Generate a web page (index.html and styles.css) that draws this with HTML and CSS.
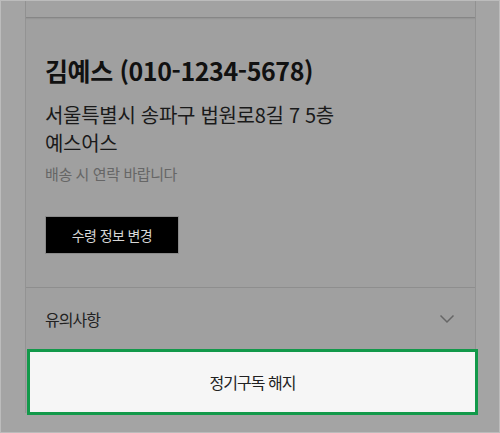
FILE: index.html
```html
<!DOCTYPE html>
<html lang="ko">
<head>
<meta charset="utf-8">
<link rel="stylesheet" href="styles.css">
</head>
<body>
<div class="frame">
  <div class="column">
    <div class="top-box"></div>
    <section class="info">
      <h2 class="name">김예스 (010-1234-5678)</h2>
      <p class="address">서울특별시 송파구 법원로8길 7 5층<br>예스어스</p>
      <p class="note">배송 시 연락 바랍니다</p>
      <button class="change-btn">수령 정보 변경</button>
    </section>
    <div class="notice-row">
      <span class="notice-label">유의사항</span>
      <svg class="chevron" width="16" height="10" viewBox="0 0 16 10"><path d="M1.5 1.5 L8 8 L14.5 1.5" fill="none" stroke="#666" stroke-width="1.5"/></svg>
    </div>
    <button class="cancel-btn">정기구독 해지</button>
  </div>
</div>
</body>
</html>
```

FILE: styles.css
```css
* { box-sizing: border-box; }
html, body { margin: 0; padding: 0; }
body {
  width: 500px;
  height: 433px;
  font-family: "Noto Sans CJK KR", "Noto Sans", sans-serif;
}
.frame {
  width: 500px;
  height: 433px;
  background: #a4a4a4;
  border: 1px solid #bcbcbc;
  overflow: hidden;
}
.column {
  margin-left: 24px;
  width: 451px;
  height: 412px;
  background: #a0a0a0;
  border-left: 1px solid #939393;
  border-right: 1px solid #939393;
}
.top-box {
  height: 17px;
  background: #a2a2a2;
  border-bottom: 1px solid #868686;
  box-shadow: 0 1px 1px rgba(0,0,0,0.06);
}
.info {
  padding: 36px 19px 0 19px;
  height: 270px;
  border-bottom: 1px solid #8e8e8e;
}
.name {
  margin: 0;
  font-size: 25px;
  font-weight: 700;
  line-height: 32px;
  color: #111;
  letter-spacing: -0.4px;
}
.address {
  margin: 15px 0 0 0;
  font-size: 20px;
  line-height: 28px;
  color: #1a1a1a;
  letter-spacing: -0.3px;
}
.note {
  margin: 7px 0 0 0;
  font-size: 15px;
  line-height: 20px;
  color: #666;
  letter-spacing: -0.4px;
}
.change-btn {
  display: block;
  margin-top: 32px;
  width: 134px;
  height: 38px;
  background: #000;
  border: 1px solid #8a8a8a;
  color: #d6d6d6;
  font-family: inherit;
  font-size: 14px;
  letter-spacing: -0.6px;
  padding: 0;
}
.notice-row {
  height: 61px;
  display: flex;
  align-items: center;
  justify-content: space-between;
  padding: 0 20px 0 19px;
}
.notice-label {
  font-size: 16px;
  color: #222;
  letter-spacing: -1px;
}
.chevron { display: block; }
.cancel-btn {
  display: flex;
  align-items: center;
  justify-content: center;
  margin-left: 1px;
  width: 451px;
  height: 66px;
  background: #f6f6f6;
  border: 3px solid #12994a;
  color: #222;
  font-family: inherit;
  font-size: 16px;
  letter-spacing: -1px;
  padding: 0;
}
```
